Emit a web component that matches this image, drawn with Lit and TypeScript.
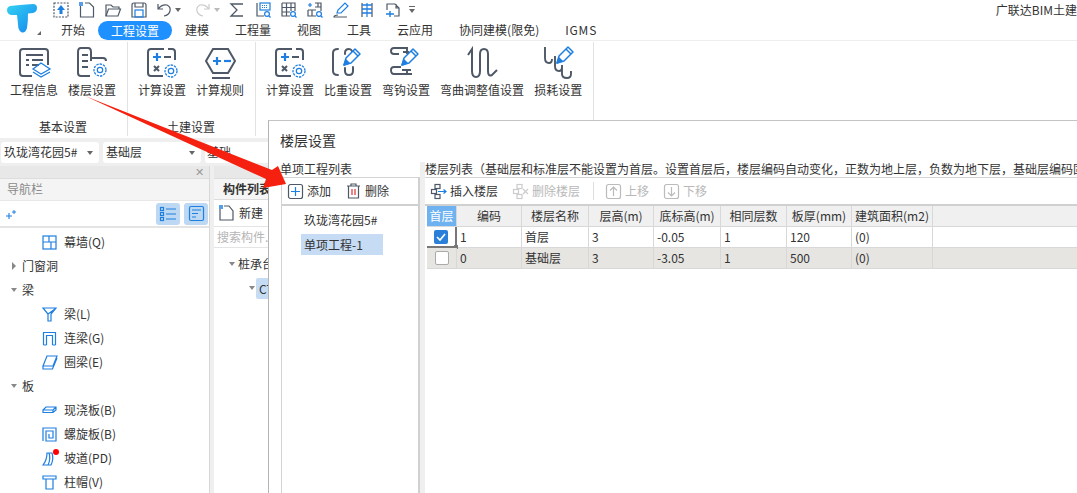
import { LitElement, html, css, svg } from "lit";
import { customElement } from "lit/decorators.js";

const B = "#1e7fe0";
const G = "#4e5866";

const ic = (w: number, h: number, body: unknown) =>
  html`<svg class="ic" width=${w} height=${h} viewBox="0 0 ${w} ${h}" fill="none" stroke-width="1.2">${body}</svg>`;

const gear = (cx: number, cy: number, r = 5) => svg`
  <circle cx=${cx} cy=${cy} r=${r} stroke=${B} stroke-width="1.3" stroke-dasharray="2.4 1"/>
  <circle cx=${cx} cy=${cy} r=${r * 0.45} stroke=${B} stroke-width="1.2"/>`;

const pencil = (x: number, y: number) => svg`
  <g transform="translate(${x} ${y})" stroke=${B} stroke-width="1.5" stroke-linejoin="round">
    <path d="M0 16 L2 9 L11 0 L16 5 L7 14 Z"/><path d="M9 2 L14 7"/><path d="M0 16 L2 11 L5 14Z" fill=${B}/>
  </g>`;

const quick = [
  ic(16, 16, svg`<rect x="1" y="1" width="14" height="14" stroke=${G} stroke-dasharray="2 1.2"/><path d="M8 3 L12 8 H9.5 V12 H6.5 V8 H4Z" fill=${B}/>`),
  ic(16, 16, svg`<path d="M1.5 4 V15 H14.5 V5 L10.5 1 H6" stroke=${G}/><rect x="0" y="0" width="4" height="4" fill=${B} opacity=".75"/>`),
  ic(16, 16, svg`<path d="M1 14 V3 H6 L8 5 H14 V7" stroke=${G}/><path d="M1 14 L3.5 7 H15.5 L13 14Z" stroke=${G}/>`),
  ic(16, 16, svg`<path d="M1 3 Q1 1 3 1 H13 Q15 1 15 3 V15 H1Z" stroke=${G}/><path d="M4 1 V5 H12 V1" stroke=${G}/><rect x="4" y="8" width="8" height="7" stroke=${B}/>`),
];

const rightQuick = [
  ic(16, 16, svg`<path d="M14 2 H2 L8 8 L2 14 H14" stroke=${G} stroke-width="1.3"/>`),
  ic(16, 16, svg`<path d="M2 1 V14 H9" stroke=${G}/><rect x="5" y="1" width="10" height="7" stroke=${B}/><path d="M7 3.5 H13 M7 5.5 H13" stroke=${B} stroke-dasharray="1 1"/><circle cx="12" cy="12" r="2.4" stroke=${B}/><path d="M14 14 L15.5 15.5" stroke=${B}/>`),
  ic(16, 16, svg`<path d="M1 1 H14 V9 M1 1 V14 H9 M1 5.5 H14 M1 10 H9 M5.5 1 V14 M10 1 V9" stroke=${G}/><circle cx="12" cy="12" r="2.4" stroke=${B}/><path d="M14 14 L15.5 15.5" stroke=${B}/>`),
  ic(16, 16, svg`<path d="M3 1 V5 M1 3 H5" stroke=${B}/><path d="M8 1 H14 V9 M8 5 H14 M11 1 V5 M1 8 H9 M1 8 V14 H9 M5 8 V14" stroke=${G}/><circle cx="12" cy="12" r="2.4" stroke=${B}/><path d="M14 14 L15.5 15.5" stroke=${B}/>`),
  ic(16, 16, svg`<path d="M4 11 L5 8 L12 1 L15 4 L8 11Z" stroke=${B}/><path d="M5 13 Q1 13 1 15 H14" stroke=${G}/>`),
  ic(16, 16, svg`<path d="M3 1 V15 M13 1 V15" stroke=${G}/><path d="M3 3 H13 M3 7 H13 M3 11 H13" stroke=${B} stroke-width="1.4"/><path d="M8 1 V15" stroke=${B}/>`),
  ic(16, 16, svg`<path d="M2 8 V2 H10 L14 6 V14 H9 M11 2 V6 H14" stroke=${G}/><path d="M5 9 V15 M1 12 H9" stroke=${B} stroke-width="1.4"/>`),
];

const settings = (extra: unknown = "") => svg`
  <path d="M22 3 H26 Q29 3 29 6 V14 M17 30 H5 Q2 30 2 27 V6 Q2 3 5 3 H18" stroke=${G} stroke-width="2"/>
  <path d="M7 11 H15 M11 7 V15" stroke=${B} stroke-width="2.2"/><path d="M18 11 H25" stroke=${G} stroke-width="2"/>
  <path d="M8 20 L13 25 M13 20 L8 25" stroke=${G} stroke-width="2"/>${extra}${gear(25, 25, 6)}`;

const ribbonIcons = {
  info: svg`<path d="M14 30 H5 Q2 30 2 27 V6 Q2 3 5 3 H27 Q30 3 30 6 V19" stroke=${G} stroke-width="2"/>
    <path d="M8 9 H25 M14 14 H25 M14 19 H21 M8 14 H11 M8 19 H11" stroke=${G} stroke-width="1.8"/>
    <path d="M23 17 L32 23 L23 28 L15 23Z M15 26 L23 31 L32 26" stroke=${B} stroke-width="1.3"/>`,
  floor: svg`<path d="M14 30 H5 Q2 30 2 27 V6 Q2 2 5 2 H12 Q15 2 15 6 V15 M15 12 H27 Q30 12 30 15" stroke=${G} stroke-width="2"/>
    <path d="M6 9 H12 M6 15 H12 M6 21 H12" stroke=${G} stroke-width="1.8"/>${gear(24, 24, 6)}`,
  calc: settings(),
  rule: svg`<path d="M9 3 H24 L31 15 L24 27 H9 L2 15Z" stroke=${G} stroke-width="2"/><path d="M8 32 H26" stroke=${G} stroke-width="2"/>
    <path d="M9 15 H17 M13 11 V19" stroke=${B} stroke-width="2.2"/><path d="M20 15 H27" stroke=${B} stroke-width="2.2"/>`,
  weight: svg`<path d="M6 3 Q1 3 1 7 V25 Q1 29 6 29 M13 8 V7 Q13 3 17 3 Q19 3 20 5 M13 22 V25 Q13 29 17 29 Q21 29 21 25 V21" stroke=${G} stroke-width="2" stroke-linecap="round"/>${pencil(12, 3)}`,
  hook: svg`<path d="M18 2 H4 Q1 2 1 5 Q1 8 4 8 H9 M17 2 V8 M13 6 H19 M11 21 H4 Q1 21 1 24 Q1 28 4 28 H22 M17 23 V28 M12 24 H21" stroke=${G} stroke-width="1.9"/>${pencil(12, 3)}`,
  bend: svg`<path d="M2 9 L6 3 V25 Q6 31 10 31 Q14 31 14 25 V8 Q14 3 18 3 Q22 3 22 8 V25 Q22 31 26 29 L31 24" stroke=${G} stroke-width="2"/>`,
  loss: svg`<path d="M3 1 V12 Q3 17 7 17 Q10 17 10 13 M13 10 V20 Q13 25 17 25 Q20 25 20 21 M20 19 V28 Q20 32 25 32 Q29 32 29 28 V25" stroke=${G} stroke-width="1.9"/>${pencil(15, 1)}`,
};

const treeIcon: Record<string, unknown> = {
  wall: svg`<rect x="1" y="1" width="13" height="13" stroke=${B} stroke-width="1.2"/><path d="M1 7 H14 M7 1 V7 M9 7 V14" stroke=${B}/>`,
  beam: svg`<path d="M1 1 H14 L9 7 V14 H6 V7 Z M6 7 L13 2" stroke=${B}/>`,
  link: svg`<path d="M1.5 14 V1.5 H13.5 V14 M4.5 14 V4.5 H10.5 V14 M1.5 14 H4.5 M10.5 14 H13.5" stroke=${B}/>`,
  ring: svg`<path d="M5 1 H15 L11 11 H1Z M1 11 V14 H10.5 L15 3" stroke=${B}/>`,
  slab: svg`<path d="M1 7 L4 4 H14 V7 L11 9.5 H1Z M1 7 H11 V9.5 M11 7 L14 4" stroke=${B} stroke-width="1.2"/>`,
  spiral: svg`<path d="M1 14 V1 H14 V14 H4 V4 H11 V11 H7 V7" stroke=${B}/>`,
  ramp: svg`<path d="M1 14 Q5 9 5 2 H10 Q12 8 9 14Z M7 2 Q9 8 6 14" stroke=${B}/>`,
  cap: svg`<path d="M1 1 H14 V4 H1Z M4 4 V14 H11 V4" stroke=${B}/>`,
};

const nodes = [
  { t: "幕墙(Q)", i: "wall" },
  { t: "门窗洞", a: "r" },
  { t: "梁", a: "d" },
  { t: "梁(L)", i: "beam" },
  { t: "连梁(G)", i: "link" },
  { t: "圈梁(E)", i: "ring" },
  { t: "板", a: "d" },
  { t: "现浇板(B)", i: "slab" },
  { t: "螺旋板(B)", i: "spiral" },
  { t: "坡道(PD)", i: "ramp", dot: true },
  { t: "柱帽(V)", i: "cap" },
];

const tabs = ["开始", "工程设置", "建模", "工程量", "视图", "工具", "云应用", "协同建模(限免)", "IGMS"];

const groups = [
  { label: "基本设置", items: [["工程信息", "info"], ["楼层设置", "floor"]] },
  { label: "土建设置", items: [["计算设置", "calc"], ["计算规则", "rule"]] },
  { label: "", items: [["计算设置", "calc"], ["比重设置", "weight"], ["弯钩设置", "hook"], ["弯曲调整值设置", "bend"], ["损耗设置", "loss"]] },
];

const cols = [
  ["首层", 30], ["编码", 65], ["楼层名称", 67], ["层高(m)", 65], ["底标高(m)", 67],
  ["相同层数", 66], ["板厚(mm)", 65], ["建筑面积(m2)", 81],
] as [string, number][];

@customElement("app-root")
export class AppRoot extends LitElement {
  static styles = css`
    :host { display: block; width: 1077px; height: 493px; position: relative; overflow: hidden; background: #fff;
      font: 12px/1.2 "Noto Sans CJK SC", "Noto Sans", sans-serif; color: #333; }
    .ic { display: block; flex: none; overflow: visible; }
    .top { display: flex; height: 41px; border-bottom: 1px solid #eee; box-sizing: border-box; }
    .logo { width: 48px; flex: none; position: relative; padding: 4px 0 0 7px; box-sizing: border-box; }
    .logo::after { content: ""; position: absolute; left: 37px; top: 31px; border: 2px solid transparent; border-right-color: #666; border-bottom-color: #666; }
    .top-main { flex: 1; min-width: 0; display: flex; flex-direction: column; }
    .quick { height: 21px; padding-bottom: 1px; box-sizing: border-box; display: flex; align-items: center; padding-left: 5px; }
    .quick .ic { margin-right: 10px; }
    .undo { margin-right: 3px !important; }
    .redo { margin-right: 4px !important; }
    .drop { width: 0; height: 0; border: 3px solid transparent; border-top: 4px solid #666; border-bottom: 0; flex: none; }
    .drop.a { margin-right: 14px; }
    .drop.b { margin-right: 9px; border-top-color: #bbb; }
    .more { margin-left: -2px; }
    .brand { margin-left: auto; white-space: nowrap; flex: none; }
    .tabs { display: flex; height: 20px; align-items: center; }
    .tab { padding: 0 13px; height: 16px; line-height: 16px; border-radius: 8px; white-space: nowrap; }
    .tab.on { background: #1e90ff; color: #fff; height: 19px; line-height: 19px; border-radius: 10px; }
    .tab.latin { letter-spacing: 0.8px; }
    .ribbon { display: flex; height: 97px; background: #fff; }
    .group { display: flex; flex-direction: column; padding: 0 11px 0 10px; border-right: 1px solid #e2e2e2; height: 94px; margin-top: 1px; }
    .items { display: flex; gap: 10px; height: 76px; }
    .item { display: flex; flex-direction: column; align-items: center; padding-top: 4px; box-sizing: border-box; }
    .item span { margin-top: 3px; line-height: 16px; white-space: nowrap; }
    .glabel { text-align: center; line-height: 16px; margin-top: 1px; }
    .selrow { background: #efefef; display: flex; gap: 4px; padding: 4px 0 3px 1px; height: 28px; box-sizing: border-box; }
    .combo { width: 98px; background: #fff; border-radius: 3px; display: flex; align-items: center; padding: 0 6px 0 3px; box-sizing: border-box; justify-content: space-between; height: 21px; }
    .combo.wide { width: 70px; padding-left: 2px; }
    .work { display: flex; background: #efefef; height: 327px; }
    .nav { width: 210px; background: #fff; border-right: 1px solid #d8d8d8; box-sizing: border-box; flex: none; }
    .strip { height: 12px; background: #e8e8e8; display: flex; justify-content: flex-end; align-items: center; padding-right: 5px; color: #999; font-size: 11px; }
    .navhead { height: 22px; line-height: 20px; background: #f4f4f4; color: #8a8a8a; padding-left: 7px; border-top: 1px solid #ddd; box-sizing: border-box; }
    .navtool { height: 28px; display: flex; align-items: center; gap: 4px; border-top: 1px solid #e8e8e8; border-bottom: 2px solid #e4e4e4; box-sizing: border-box; padding: 0 1px 0 6px; }
    .navtool .sp { flex: 1; }
    .tbtn { width: 24px; height: 22px; background: #bdd8f2; border-radius: 3px; display: flex; align-items: center; justify-content: center; }
    .tree { display: flex; flex-direction: column; padding-top: 2px; }
    .node { height: 24px; display: flex; align-items: center; position: relative; }
    .arrow { width: 10px; margin-left: 9px; margin-right: 3px; display: flex; justify-content: center; }
    .ar { border: 4px solid transparent; border-left: 4px solid #888; border-right: 0; }
    .ad { border: 3.5px solid transparent; border-top: 4px solid #888; border-bottom: 0; }
    .leaf { margin-left: 42px; margin-right: 7px; position: relative; height: 15px; }
    .dot { position: absolute; width: 6px; height: 6px; border-radius: 50%; background: #f00; left: 11px; top: -2px; }
    .list { margin-left: 4px; flex: 1; background: #fff; min-width: 0; }
    .listtab { height: 22px; line-height: 20px; font-weight: 700; background: #f5f5f5; padding-left: 9px; border-top: 1px solid #ddd; border-bottom: 1px solid #ddd; box-sizing: border-box; white-space: nowrap; overflow: hidden; }
    .new { height: 27px; display: flex; align-items: center; gap: 5px; padding-left: 5px; border-bottom: 1px solid #e4e4e4; box-sizing: border-box; }
    .search { height: 21px; line-height: 20px; color: #b5b5b5; padding-left: 3px; border-bottom: 1px solid #e4e4e4; box-sizing: border-box; white-space: nowrap; overflow: hidden; }
    .ltree { height: 24px; display: flex; align-items: center; white-space: nowrap; gap: 3px; padding-left: 15px; margin-top: 4px; }
    .ltree.sub { padding-left: 35px; margin-top: 0; gap: 1px; }
    .ltree.sub b { font-weight: 400; background: #c5dcf4; padding: 0 0 0 3px; line-height: 21px; flex: 1; border-radius: 2px 0 0 2px; }

    .dialog { position: absolute; left: 268px; top: 120px; right: 0; bottom: 0; background: #fff; border-left: 1px solid #b4b4b4; border-top: 1px solid #c4c4c4; display: flex; flex-direction: column; box-sizing: border-box; }
    .dtitle { font-size: 14px; line-height: 20px; padding: 9px 0 0 11px; height: 34px; box-sizing: border-box; }
    .dbody { flex: 1; display: flex; min-height: 0; }
    .dleft { width: 151px; padding-left: 11px; box-sizing: border-box; flex: none; display: flex; flex-direction: column; }
    .dcap { height: 22px; line-height: 27px; white-space: nowrap; }
    .lpanel { flex: 1; border: 1px solid #d4d4d4; border-bottom: 0; border-right-width: 2px; border-right-color: #d0d0d0; margin-left: 1px; }
    .ptool { height: 28px; display: flex; align-items: center; border-bottom: 2px solid #d0d0d0; box-sizing: border-box; }
    .pbtn { display: flex; align-items: center; gap: 4px; white-space: nowrap; }
    .lpanel .pbtn { margin-left: 6px; margin-right: 15px; }
    .lpanel .pbtn + .pbtn { margin-left: 0; }
    .plist { padding: 3px 0 0 19px; }
    .pitem { height: 22px; line-height: 22px; padding-left: 3px; width: 82px; box-sizing: border-box; white-space: nowrap; }
    .pitem.sel { background: #c5dcf4; height: 21px; line-height: 21px; margin-top: 3px; }
    .dgap { width: 5px; background: #efefef; flex: none; margin-top: 7px; }
    .dright { flex: 1; min-width: 0; display: flex; flex-direction: column; }
    .dright .dcap { overflow: hidden; }
    .rpanel { flex: 1; border-top: 1px solid #d4d4d4; }
    .rtool { padding-left: 6px; gap: 15px; }
    .dim { color: #b8b8b8; }
    .vsep { width: 1px; height: 18px; background: #ddd; margin: 0 -3px 0 -2px; }
    .trow { display: flex; padding-left: 2px; }
    .cell { box-sizing: border-box; flex: none; border-right: 1px solid #d8d8d8; border-bottom: 1px solid #d8d8d8; padding-left: 3px; display: flex; align-items: center; white-space: nowrap; height: 21px; }
    .trow.head .cell { background: #f0f0f0; justify-content: center; padding: 0; }
    .trow.head .cell.first { background: #6fb2f2; color: #fff; }
    .trow.alt .cell { background: #e6e5e2; }
    .cell.fill { flex: 1; border-right: 0; }
    .cell.chk { justify-content: center; padding: 0; position: relative; }
    .row1chk { border: 2px solid #777; border-top: 0; border-left: 0; }
    .row1chk::after { content: ""; position: absolute; right: -3px; bottom: -3px; width: 4px; height: 4px; background: #777; }
    .box { width: 14px; height: 14px; box-sizing: border-box; border: 1px solid #aaa; border-radius: 2px; background: #fff; }
    .box.on { background: #2a80d8; border: 0; display: flex; align-items: center; justify-content: center; }
    .redarrow { position: absolute; left: 0; top: 0; pointer-events: none; }
  `;

  render() {
    return html`
      <div class="top">
        <div class="logo">
          <svg class="ic" width="30" height="29" viewBox="0 0 30 29">
            <defs><linearGradient id="lg" x1="0" y1="0" x2="1" y2="1"><stop offset="0" stop-color="#34d2f2"/><stop offset="1" stop-color="#1286ee"/></linearGradient></defs>
            <path d="M3 2 Q12 1 26 0 Q30 0 30 4 Q30 8 26 9 L21 9.5 Q21 18 20 24 Q18 30 14 28 Q11 26 11 20 L10 11 L4 11 Q0 10 0 6 Q0 3 3 2Z" fill="url(#lg)"/>
          </svg>
        </div>
        <div class="top-main">
          <div class="quick">
            ${quick}
            <svg class="ic undo" width="15" height="14" viewBox="0 0 15 14" fill="none"><path d="M1 1 V6 H6 M1 6 Q5 1 10 2 Q14 4 13 8 Q12 12 7 13" stroke="${G}" stroke-width="1.2"/></svg>
            <span class="drop a"></span>
            <svg class="ic redo" width="15" height="14" viewBox="0 0 15 14" fill="none"><path d="M14 1 V6 H9 M14 6 Q10 1 5 2 Q1 4 2 8 Q3 12 8 13" stroke="#ccc" stroke-width="1.2"/></svg>
            <span class="drop b"></span>
            ${rightQuick}
            <svg class="ic more" width="6" height="8" viewBox="0 0 6 8"><path d="M0 .5 H6" stroke="#666"/><path d="M0 3 H6 L3 7Z" fill="#666"/></svg>
            <span class="brand">广联达BIM土建</span>
          </div>
          <div class="tabs">
            ${tabs.map((t) => html`<div class="tab ${t === "工程设置" ? "on" : ""} ${t === "IGMS" ? "latin" : ""}">${t}</div>`)}
          </div>
        </div>
      </div>

      <div class="ribbon">
        ${groups.map((g) => html`
          <div class="group">
            <div class="items">
              ${g.items.map(([t, k]) => html`<div class="item">
                ${ic(32, 33, ribbonIcons[k as keyof typeof ribbonIcons])}
                <span>${t}</span>
              </div>`)}
            </div>
            <div class="glabel">${g.label}</div>
          </div>`)}
      </div>

      <div class="selrow">
        <div class="combo"><span>玖珑湾花园5#</span><span class="drop"></span></div>
        <div class="combo"><span>基础层</span><span class="drop"></span></div>
        <div class="combo wide"><span>基础</span></div>
      </div>

      <div class="work">
        <div class="nav">
          <div class="strip">✕</div>
          <div class="navhead">导航栏</div>
          <div class="navtool">
            ${ic(10, 10, svg`<path d="M3 4 V10 M0 7 H6" stroke="${B}" stroke-width="1.1"/><path d="M8 1 V5 M6 3 H10" stroke="${B}" stroke-width="1"/>`)}
            <span class="sp"></span>
            <div class="tbtn">${ic(16, 14, svg`<path d="M6 2 H16 M6 7 H16 M6 12 H16" stroke="${B}"/><rect x="0.5" y="0.5" width="3" height="3" stroke="${B}"/><rect x="0.5" y="5.5" width="3" height="3" stroke="${B}"/><rect x="0.5" y="10.5" width="3" height="3" stroke="${B}"/>`)}</div>
            <div class="tbtn">${ic(15, 15, svg`<rect x="0.5" y="0.5" width="14" height="14" rx="1.5" stroke="${B}"/><path d="M3 4 H12 M3 7.5 H9 M3 11 H7" stroke="${B}"/>`)}</div>
          </div>
          <div class="tree">
            ${nodes.map((n) => html`<div class="node">
              ${n.i
                ? html`<div class="leaf">${ic(15, 15, treeIcon[n.i])}${n.dot ? html`<span class="dot"></span>` : ""}</div>`
                : html`<div class="arrow"><span class=${n.a === "r" ? "ar" : "ad"}></span></div>`}
              <span>${n.t}</span>
            </div>`)}
          </div>
        </div>
        <div class="list">
          <div class="strip"></div>
          <div class="listtab">构件列表</div>
          <div class="new">
            ${ic(15, 16, svg`<path d="M1 4 V15 H14 V6 L10 1 H5" stroke="${G}"/><rect x="0" y="0" width="4" height="4" fill="${B}" opacity=".75"/>`)}
            <span>新建</span>
          </div>
          <div class="search">搜索构件...</div>
          <div class="ltree"><span class="ad"></span><span>桩承台</span></div>
          <div class="ltree sub"><span class="ad"></span><b>CT-1</b></div>
        </div>
      </div>

      <div class="dialog">
        <div class="dtitle">楼层设置</div>
        <div class="dbody">
          <div class="dleft">
            <div class="dcap">单项工程列表</div>
            <div class="lpanel">
              <div class="ptool">
                <div class="pbtn">
                  ${ic(15, 15, svg`<rect x="0.5" y="0.5" width="14" height="14" rx="2" stroke="${G}"/><path d="M7.5 3 V12 M3 7.5 H12" stroke="${B}"/>`)}
                  <span>添加</span>
                </div>
                <div class="pbtn">
                  ${ic(15, 16, svg`<path d="M1 3 H14 M5 3 V1 H10 V3 M2.5 3 V15 H12.5 V3" stroke="${G}"/><path d="M6 6 V12 M9 6 V12" stroke="#e03030"/>`)}
                  <span>删除</span>
                </div>
              </div>
              <div class="plist">
                <div class="pitem">玖珑湾花园5#</div>
                <div class="pitem sel">单项工程-1</div>
              </div>
            </div>
          </div>
          <div class="dgap"></div>
          <div class="dright">
            <div class="dcap">楼层列表（基础层和标准层不能设置为首层。设置首层后，楼层编码自动变化，正数为地上层，负数为地下层，基础层编码固定为0）</div>
            <div class="rpanel">
              <div class="ptool rtool">
                <div class="pbtn">
                  ${ic(15, 15, svg`<rect x="4" y="0.5" width="5" height="4" stroke="${G}"/><rect x="0.5" y="5.5" width="5" height="4" stroke="${G}"/><rect x="4" y="10.5" width="5" height="4" stroke="${G}"/><path d="M7 7.5 H15 M12.5 5.5 L15 7.5 L12.5 9.5" stroke="${B}"/>`)}
                  <span>插入楼层</span>
                </div>
                <div class="pbtn dim">
                  ${ic(15, 15, svg`<rect x="4" y="0.5" width="5" height="4" stroke="#ccc"/><rect x="0.5" y="5.5" width="5" height="4" stroke="#ccc"/><rect x="4" y="10.5" width="5" height="4" stroke="#ccc"/><path d="M10 5 L15 10 M15 5 L10 10" stroke="#ccc"/>`)}
                  <span>删除楼层</span>
                </div>
                <div class="vsep"></div>
                <div class="pbtn dim">
                  ${ic(15, 15, svg`<rect x="0.5" y="0.5" width="14" height="14" rx="2" stroke="#bbb"/><path d="M7.5 12 V3.5 M4 6.5 L7.5 3 L11 6.5" stroke="#bbb"/>`)}
                  <span>上移</span>
                </div>
                <div class="pbtn dim">
                  ${ic(15, 15, svg`<rect x="0.5" y="0.5" width="14" height="14" rx="2" stroke="#bbb"/><path d="M7.5 3 V11.5 M4 8.5 L7.5 12 L11 8.5" stroke="#bbb"/>`)}
                  <span>下移</span>
                </div>
              </div>
              <div class="trow head">
                ${cols.map(([t, w], i) => html`<div class="cell ${i === 0 ? "first" : ""}" style="width:${w}px">${t}</div>`)}
                <div class="cell fill"></div>
              </div>
              ${[["1", "首层", "3", "-0.05", "1", "120", "(0)"], ["0", "基础层", "3", "-3.05", "1", "500", "(0)"]].map((r, ri) => html`
                <div class="trow ${ri === 1 ? "alt" : ""}">
                  <div class="cell chk ${ri === 0 ? "row1chk" : ""}" style="width:${cols[0][1]}px">
                    ${ri === 0
                      ? html`<span class="box on">${ic(10, 8, svg`<path d="M1 4 L4 7 L9 1" stroke="#fff" stroke-width="1.6"/>`)}</span>`
                      : html`<span class="box"></span>`}
                  </div>
                  ${r.map((v, i) => html`<div class="cell" style="width:${cols[i + 1][1]}px">${v}</div>`)}
                  <div class="cell fill"></div>
                </div>`)}
            </div>
          </div>
        </div>
      </div>

      <svg class="redarrow" width="1077" height="493" viewBox="0 0 1077 493">
        <path d="M85 96 L272 170 L278 166 L286 184 L263 188 L266 179Z" fill="#f5200f"/>
      </svg>
    `;
  }
}
